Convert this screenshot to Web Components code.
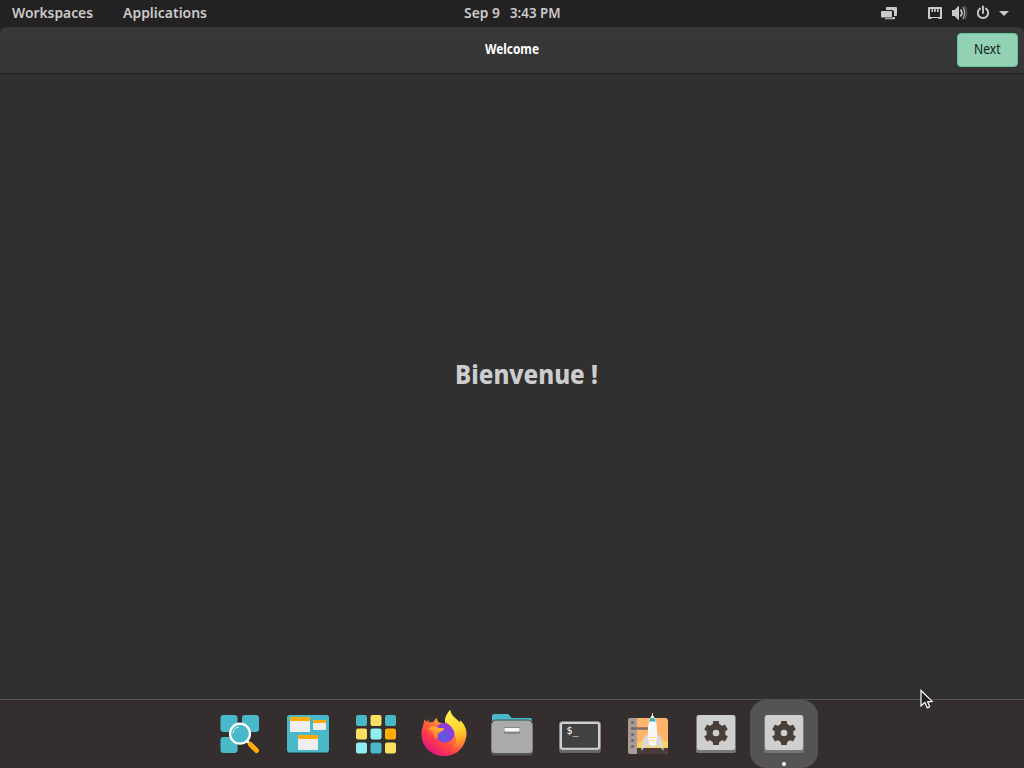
<!DOCTYPE html>
<html lang="en">
<head>
<meta charset="utf-8">
<title>Welcome</title>
<style>
html,body{margin:0;height:100%;overflow:hidden;background:#303030}
</style>
</head>
<body>
<desktop-shell></desktop-shell>
<script>
const define = (name, html, setup) => {
  const t = document.createElement('template');
  t.innerHTML = html;
  customElements.define(name, class extends HTMLElement {
    constructor() {
      super();
      this.attachShadow({ mode: 'open' }).append(t.content.cloneNode(true));
    }
    connectedCallback() { if (setup) setup(this, this.shadowRoot); }
  });
};

/* A label whose text is condensed to the width given in its attribute. */
define('fit-label', `
<style>
:host{display:block;white-space:nowrap;flex:none}
span{display:block;width:max-content;transform-origin:0 50%}
</style><span><slot></slot></span>`, (el, root) => {
  const w = +el.getAttribute('width');
  const s = root.querySelector('span');
  el.style.width = w + 'px';
  const fit = () => { s.style.transform = 'none'; s.style.transform = `scaleX(${w / s.getBoundingClientRect().width})`; };
  fit();
  requestAnimationFrame(fit);
});

define('top-bar', `
<style>
:host{display:grid;grid-template-columns:1fr auto 1fr;align-items:center;height:27px;background:#242122;color:#cbcaca;font:650 14.2px/26px "Noto Sans",sans-serif;box-sizing:border-box;padding:0 14px 1px 12px}
.l{display:flex;gap:30px}.c{display:flex;gap:10px;margin-left:2px}
.r{display:flex;justify-content:flex-end;align-items:center}
svg{display:block;fill:#cbcaca}
</style>
<div class="l"><fit-label width="81">Workspaces</fit-label><fit-label width="84">Applications</fit-label></div>
<div class="c"><fit-label width="36">Sep 9</fit-label><fit-label width="50.500">3:43 PM</fit-label></div>
<div class="r">
<svg width="130" height="20" viewBox="880 3 130 20">
<path d="M887 7h9q1 0 1 1v7q0 1-1 1h-2v-4q0-2-2-2h-6V8q0-1 1-1z"/>
<path d="M882 11h9q1 0 1 1v4.500q0 1-1 1h-9q-1 0-1-1V12q0-1 1-1z"/>
<path d="M892.700 17H895v1.500q0 .800-.800.800H885v-1.100h7z"/>
<path fill-rule="evenodd" d="M929 7h12q1 0 1 1v10q0 1-1 1h-2.500v-1h-7v1H929q-1 0-1-1V8q0-1 1-1zm1 2v8h10V9h-1.500v3h-1.500V9h-1.200v3h-1.600V9h-1.200v3h-1.500V9z"/>
<path d="M952 10h2.500L958.500 6h.500v14h-.500l-4-4H952z"/>
<g fill="none" stroke="#cbcaca" stroke-width="1.700"><path d="M960.500 9.500q2.700 3.500 0 7"/><path d="M963 7q3.200 6 0 12" stroke-width="1.400" opacity=".8"/><path d="M965 6q3 7 0 13" opacity=".28"/></g>
<g fill="none" stroke="#cbcaca" stroke-width="1.900"><path d="M980 8.600a5.200 5.200 0 1 0 6 0" stroke-linecap="round"/><path d="M983 6.500v6.500" stroke-linecap="round"/></g>
<path d="M999 11h10l-5 5z"/>
</svg></div>`);

define('action-button', `
<style>
:host{display:flex;align-items:center;justify-content:center;width:61px;height:34px;box-sizing:border-box;border:1px solid #62c49b;border-radius:4px;background:#92d1b3;color:#142019}
</style><slot></slot>`);

define('header-bar', `
<style>
:host{display:block;background:#242122}
.b{display:grid;grid-template-columns:1fr auto 1fr;align-items:center;height:47px;box-sizing:border-box;padding:0 6px 1px;border-bottom:1px solid #212121;border-radius:7px 7px 0 0;background:linear-gradient(#383838,#353535)}
fit-label{grid-column:2;font:700 13.500px/26px "Noto Sans",sans-serif;color:#fff;padding-bottom:1px}
action-button{justify-self:end}
action-button fit-label{font:400 14.300px/30px "Noto Sans",sans-serif;color:#142019;padding:0 1px 1px 0}
</style>
<div class="b"><fit-label width="54">Welcome</fit-label><action-button><fit-label width="26.500">Next</fit-label></action-button></div>`);

define('welcome-page', `
<style>
:host{display:flex;flex:1;align-items:center;justify-content:center;background:#303030;color:#cdcdcd;font:800 27px/36px "Noto Sans",sans-serif;padding:0 0 25px 29px}
</style><fit-label width="143">Bienvenue !</fit-label>`);

define('dock-item', `
<style>
:host{display:flex;position:relative;width:68px;height:68px;border-radius:16px;align-items:center;justify-content:center}
:host([active]){background:#565453}
:host([active])::after{content:"";position:absolute;left:32px;bottom:2px;width:4px;height:4px;border-radius:50%;background:#fff}
svg{display:block;width:68px;height:68px}
text{font:11px "DejaVu Sans Mono",monospace}
</style><svg viewBox="0 0 68 68"></svg>`, (el, root) => {
  root.querySelector('svg').innerHTML = ICONS[el.getAttribute('icon')];
});

const tile = (x, y, c) => `<rect x="${x}" y="${y}" width="11" height="11" rx="2" fill="${c}"/>`;
const gearTeeth = [0, 60, 120, 180, 240, 300].map(a => `<path transform="rotate(${a} 34 33)" d="M30.700 25l.500-4h5.600l.500 4z"/>`).join('');
const ICONS = {
launcher: `<g fill="#49b9c9"><rect x="14.500" y="15" width="17" height="17" rx="3"/><rect x="36" y="15" width="17" height="17" rx="3"/><rect x="14.500" y="37" width="17" height="16" rx="3"/></g>
<path d="M41 41l3.500 3.500" stroke="#eee" stroke-width="2.500"/><path d="M44.500 44.500l6 6" stroke="#ffa90a" stroke-width="5" stroke-linecap="round"/>
<circle cx="34" cy="33.700" r="10" fill="#49b9c9" stroke="#fff" stroke-width="2.200"/><path d="M27 33.500q.500-6 6-6.500" fill="none" stroke="#d9f0f4" stroke-width="1"/>`,
workspaces: `<rect x="13" y="15" width="42" height="38" rx="3" fill="#317c87"/><rect x="13" y="15" width="42" height="37" rx="3" fill="#49b9c9"/>
<g fill="#eee"><rect x="16" y="17" width="20" height="15" rx="1"/><rect x="39" y="20" width="13" height="10" rx="1"/><rect x="24" y="35" width="20" height="15" rx="1"/></g>
<path fill="#ffa90a" d="M17 17h18q1 0 1 1v3H16v-3q0-1 1-1zM40 20h11q1 0 1 1v2H39v-2q0-1 1-1zM25 35h18q1 0 1 1v3H24v-3q0-1 1-1z"/>`,
apps: tile(14,15,'#49b9c9')+tile(28.500,15,'#f9df62')+tile(43,15,'#49b9c9')+tile(14,28.500,'#f9df62')+tile(28.500,28.500,'#92edef')+tile(43,28.500,'#ffad05')+tile(14,42.500,'#92edef')+tile(28.500,42.500,'#49b9c9')+tile(43,42.500,'#f9df62'),
firefox: `<defs><linearGradient id="f" x1=".85" y1=".1" x2=".25" y2=".95"><stop offset="0" stop-color="#ffe04a"/><stop offset=".3" stop-color="#ffb52c"/><stop offset=".5" stop-color="#ff7139"/><stop offset=".75" stop-color="#ff3b49"/><stop offset="1" stop-color="#e11586"/></linearGradient>
<linearGradient id="y" x1=".3" y1="0" x2=".5" y2="1"><stop offset="0" stop-color="#fff04d"/><stop offset=".55" stop-color="#ffd52f"/><stop offset=".8" stop-color="#ffa529"/><stop offset="1" stop-color="#ff6a36"/></linearGradient><radialGradient id="p" cx=".45" cy=".65"><stop offset="0" stop-color="#5a5fe0"/><stop offset="1" stop-color="#9139db"/></radialGradient></defs>
<path fill="url(#f)" d="M19 19q-.500 2 0 3.500l4.500-.800q1.200-2.500 3.500-4-.300 3 1.500 4.500l6.500 1.500q1-8 5-13.500 1 5 5 8l4.500 4 1-2q5.500 6 6 12C56.500 46 47.500 56 34.300 56 21 56 11.500 46.500 11.500 34c0-6 2.500-9.500 2.800-14.500L17 22z"/>
<circle cx="34.700" cy="32.800" r="10" fill="url(#p)"/>
<path fill="url(#y)" d="M40 9.800q1 5 6 9 3 2.500 4.500 4.700l1-1.500q5 6 4.800 14Q54 45 43 49 48 42 45 34 43 26 35 22q-1-5 5-12.200z"/>
<path fill="#ff8a35" d="M18 29q4-4 11-1l5 .300q.500 2-5.500 4.700-1.500 2-.500 4.500Q25 40 24 36q-1-4-6-7z"/><path fill="#ffab2e" d="M19 28.500q5-3.500 10-.500l5 .300q.500 2-6 4.200-4-3.500-9-4z"/>`,
files: `<path fill="#49b9c9" d="M14 25V16q0-2 2-2h13q2 0 3 2l1.500 2H52q2 0 2 2v5z"/><rect x="13" y="22" width="42" height="33.500" rx="3.500" fill="#555553"/><rect x="13.500" y="20.500" width="41" height="32.500" rx="3.500" fill="#ababab"/><path d="M14 23.500q0-3.500 3.500-3.500h33q3.500 0 3.500 3.500" fill="none" stroke="#4e4e4d"/>
<rect x="26" y="27" width="16" height="7" rx="1" fill="#888"/><rect x="26.500" y="28" width="15" height="3.500" fill="#fafafa"/>`,
terminal: `<rect x="13" y="22" width="42" height="31" rx="3" fill="#666"/><rect x="13.500" y="21.500" width="41" height="28.500" rx="3" fill="#cfcfcf" stroke="#777" stroke-width=".5"/><rect x="16" y="24" width="36" height="23.700" rx="1" fill="#414141"/><text x="20.500" y="34" fill="#fff" textLength="12" lengthAdjust="spacingAndGlyphs">$_</text>`,
rocket: `<clipPath id="c"><rect x="14" y="18" width="40" height="36" rx="3"/></clipPath><g clip-path="url(#c)"><path fill="#ffb36b" d="M14 18h40v36H14z"/><path fill="#f9d25f" d="M22 44q8-6 18-5 8 0 14 3v8H22z"/><path fill="#4a3d39" d="M22 48h32v6H22z"/><path fill="#a79c98" d="M14 18h9v36h-9z"/></g><path stroke="#796d69" stroke-width="2.500" d="M18 28.500h17"/><g fill="#736865"><circle cx="18.500" cy="22.500" r="1.600"/><circle cx="18.500" cy="28.500" r="1.600"/><circle cx="18.500" cy="34.500" r="1.600"/><circle cx="18.500" cy="40.500" r="1.600"/><circle cx="18.500" cy="46.500" r="1.600"/></g>
<path fill="#d8d8d8" d="M35 33q-5 3-6 8l-1.800 10q3-4.500 8.300-6l.500 2h5l.500-2q5.300 1.500 8.300 6L48 41q-1-5-6-8z"/><path fill="#f8f8f8" d="M35.500 45.500C33 33 33 21 38.400 14.500 44 21 44 33 41.500 45.500z"/><path fill="#38aebd" d="M36.200 18.500q2.200-1.500 4.400 0l1 3.500q-3-1.500-6.200 0z"/><path fill="#eee" d="M38 13h.900v3H38z"/><path d="M35 37.500h7m-6.500 3h6" stroke="#ffdc73"/>`,
gear: `<rect x="14" y="15" width="40" height="38" rx="2.500" fill="#777"/><rect x="15" y="15" width="38" height="35" rx="2.500" fill="#cfcfcf"/><g fill="#483f39"><circle cx="34" cy="33" r="9.500"/>${gearTeeth}</g><circle cx="34" cy="33" r="3.300" fill="#cfcfcf"/>`
};

define('app-dock', `
<style>
:host{display:flex;justify-content:center;height:69px;box-sizing:border-box;border-top:1px solid #555354;background:#342f2e}
</style>
<slot></slot>`);

define('mouse-pointer', `
<style>:host{display:block;position:absolute;left:918px;top:688px}svg{display:block}</style>
<svg width="18" height="24"><path d="M3 2.500v15.500l3.800-3.400 2.500 5.200q1.800-.2 2.300-1.600l-2.100-4.400 4.700-.4z" fill="#222" stroke="#fff" stroke-width="1.200"/></svg>`);

define('desktop-shell', `
<style>:host{display:flex;flex-direction:column;position:relative;width:1024px;height:768px;overflow:hidden}</style>
<top-bar></top-bar><header-bar></header-bar><welcome-page></welcome-page>
<app-dock><dock-item icon="launcher"></dock-item><dock-item icon="workspaces"></dock-item><dock-item icon="apps"></dock-item><dock-item icon="firefox"></dock-item><dock-item icon="files"></dock-item><dock-item icon="terminal"></dock-item><dock-item icon="rocket"></dock-item><dock-item icon="gear"></dock-item><dock-item icon="gear" active></dock-item></app-dock>
<mouse-pointer></mouse-pointer>`);
</script>
</body>
</html>
